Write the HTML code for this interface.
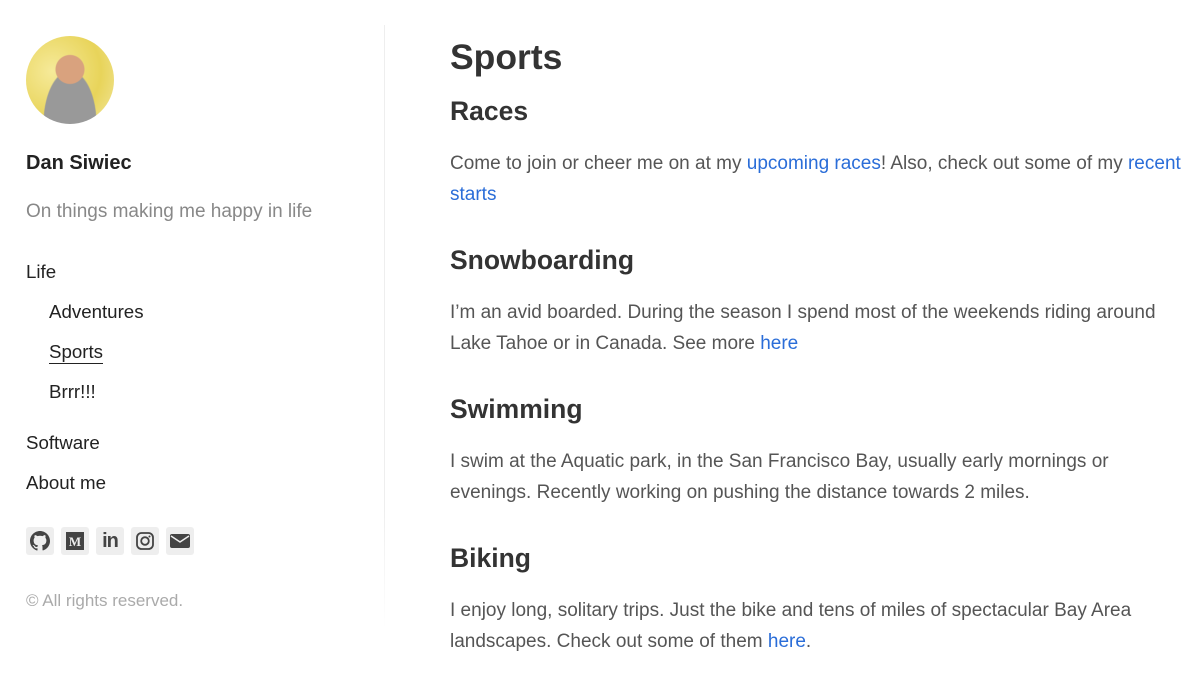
<!DOCTYPE html>
<html><head><meta charset="utf-8"><style>
*{margin:0;padding:0;box-sizing:border-box}
body{width:1200px;height:677px;background:#fff;font-family:"Liberation Sans",sans-serif;color:#333;overflow:hidden;position:relative}
.side{position:absolute;left:26px;top:0;width:340px}
.divider{position:absolute;left:384px;top:25px;width:1px;height:605px;background:linear-gradient(#eee,#eee 80%,#fff)}
.avatar{position:absolute;left:0;top:36px;width:88px;height:88px;border-radius:50%;background:radial-gradient(circle at 50% 38%,#d9a27e 0 14px,transparent 15px),radial-gradient(ellipse at 50% 100%,#999 0 26px,transparent 27px),radial-gradient(circle at 30% 40%,#f6ea9a,#e8d45a 60%,#f2e7a0)}
.name{position:absolute;top:152px;font-size:20px;font-weight:bold;color:#222}
.tag{position:absolute;top:201px;font-size:19px;color:#888}
.nav{position:absolute;font-size:18.7px;color:#222}
.icons{position:absolute;top:527px;left:0;display:flex;gap:7px}
.icons div{width:28px;height:28px;background:#eee;border-radius:3px;display:flex;align-items:center;justify-content:center}
.copy{position:absolute;top:591px;font-size:17px;color:#aaa}
.main{position:absolute;left:450px;top:0;width:740px}
h1{position:absolute;top:37px;font-size:35.5px;font-weight:bold;color:#333}
h2{position:absolute;font-size:26.5px;font-weight:bold;color:#333}
p{position:absolute;font-size:19px;line-height:30.5px;color:#555;width:740px}
a{color:#2a6dd8;text-decoration:none}
</style></head><body>
<div class="side">
<div class="avatar"></div>
<div class="name">Dan Siwiec</div>
<div class="tag">On things making me happy in life</div>
<div class="nav" style="top:261px">Life</div>
<div class="nav" style="top:301px;left:23px">Adventures</div>
<div class="nav" style="top:341px;left:23px;border-bottom:1.5px solid #222;line-height:22px">Sports</div>
<div class="nav" style="top:381px;left:23px">Brrr!!!</div>
<div class="nav" style="top:432px">Software</div>
<div class="nav" style="top:472px">About me</div>
<div class="icons">
<div><svg width="20" height="20" viewBox="0 0 16 16"><path fill="#444" d="M8 0C3.6 0 0 3.6 0 8c0 3.5 2.3 6.5 5.5 7.6.4.1.5-.2.5-.4v-1.4c-2.2.5-2.7-1-2.7-1-.4-.9-.9-1.2-.9-1.2-.7-.5.1-.5.1-.5.8.1 1.2.8 1.2.8.7 1.2 1.9.9 2.3.7.1-.5.3-.9.5-1.1-1.8-.2-3.6-.9-3.6-4 0-.9.3-1.6.8-2.1-.1-.2-.4-1 .1-2.1 0 0 .7-.2 2.2.8.6-.2 1.3-.3 2-.3s1.4.1 2 .3c1.5-1 2.2-.8 2.2-.8.4 1.1.2 1.9.1 2.1.5.6.8 1.3.8 2.1 0 3.1-1.9 3.700-3.6 3.9.3.3.5.8.5 1.5v2.2c0 .2.1.5.6.4C13.7 14.5 16 11.5 16 8c0-4.4-3.6-8-8-8z"/></svg></div>
<div><svg width="18" height="18"><rect width="18" height="18" fill="#444"/><text x="9" y="14" text-anchor="middle" font-family="Liberation Serif" font-weight="bold" font-size="13" fill="#eee">M</text></svg></div>
<div><span style="font-weight:bold;font-size:20px;color:#444;letter-spacing:-1px">in</span></div>
<div><svg width="18" height="18" viewBox="0 0 18 18"><rect x="1" y="1" width="16" height="16" rx="4.5" fill="none" stroke="#444" stroke-width="1.8"/><circle cx="9" cy="9" r="3.8" fill="none" stroke="#444" stroke-width="1.8"/><circle cx="13.5" cy="4.5" r="1" fill="#444"/></svg></div>
<div><svg width="20" height="16" viewBox="0 0 20 16"><rect y="1" width="20" height="14" rx="2" fill="#444"/><path d="M1 3l9 6 9-6" fill="none" stroke="#eee" stroke-width="1.5"/></svg></div>
</div>
<div class="copy">© All rights reserved.</div>
</div>
<div class="divider"></div>
<div class="main">
<h1>Sports</h1>
<h2 style="top:96px">Races</h2>
<p style="top:149px">Come to join or cheer me on at my <a>upcoming races</a>! Also, check out some of my <a>recent starts</a></p>
<h2 style="top:245px">Snowboarding</h2>
<p style="top:298px">I’m an avid boarded. During the season I spend most of the weekends riding around Lake Tahoe or in Canada. See more <a>here</a></p>
<h2 style="top:394px">Swimming</h2>
<p style="top:447px">I swim at the Aquatic park, in the San Francisco Bay, usually early mornings or evenings. Recently working on pushing the distance towards 2 miles.</p>
<h2 style="top:543px">Biking</h2>
<p style="top:596px">I enjoy long, solitary trips. Just the bike and tens of miles of spectacular Bay Area landscapes. Check out some of them <a>here</a>.</p>
</div>
</body></html>
